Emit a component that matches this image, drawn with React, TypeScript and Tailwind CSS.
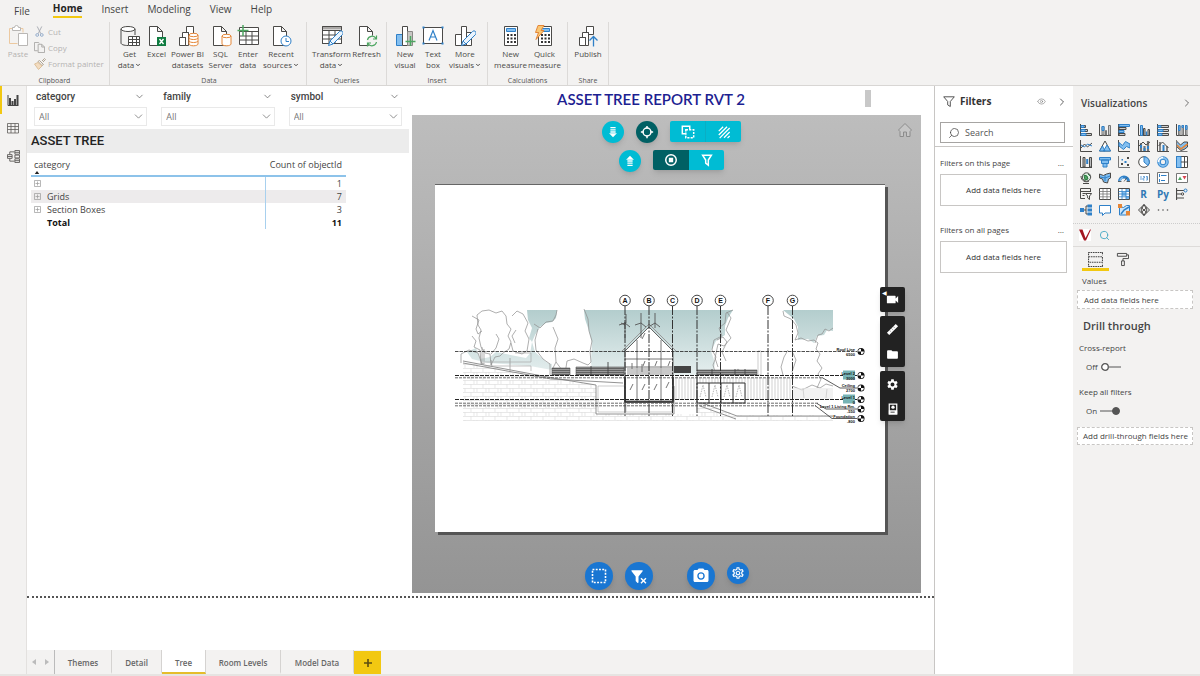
import { ReactNode, useState } from 'react'
import { clsx } from 'clsx'
import { ChevronDown, ChevronRight, Eye, Search } from 'lucide-react'
import { MdFolder, MdOutlineSettings, MdPhotoCamera, MdSettings, MdVideocam } from 'react-icons/md'

const INK = '#4b4a48'
const BLUE = '#2f80c8'
const SKY = '#83bff0'
const ORANGE = '#e58637'
const GREEN = '#4da661'

/* ---------- ribbon ---------- */

function RibbonIcon({ children }: { children: ReactNode }) {
  return (
    <svg viewBox="0 0 22 22" className="size-[22px]" fill="none" stroke={INK} strokeWidth="1" aria-hidden="true">
      {children}
    </svg>
  )
}

const sheet = <path d="M3.5 1.5h8l5 5v14h-13zM11.5 1.5v5h5" fill="#fff" />
const blocks = (
  <path d="M2.500 12.500h6v8h-6zM5.500 7.500h6v13h-3v-8h-3zM9.500 1.500h7v8h-5v-2h-2z" fill="#fff" />
)
const pencil = (
  <path d="M7.5 20.5L9 16l9.500-9.500a1.800 1.800 0 0 1 3 3L12 19zM9 16l3 3" fill="#eaf4fd" stroke={BLUE} />
)

const getDataIcon = (
  <RibbonIcon>
    <ellipse cx="9" cy="4" rx="7" ry="2.5" fill="#fff" />
    <path d="M2 4v14c0 1.500 3 2.500 7 2.500M16 4v6" />
    <path d="M9.500 11.500h11v9h-11z" fill="#fff" />
    <path d="M9.500 14.500h11M9.500 17.500h11M13.500 11.500v9M17.500 11.500v9" />
  </RibbonIcon>
)
const excelIcon = (
  <RibbonIcon>
    {sheet}
    <path d="M11 12h9v9h-9z" fill="#107c41" stroke="none" />
    <path d="M13.500 14l4 5M17.500 14l-4 5" stroke="#fff" strokeWidth="1.4" />
  </RibbonIcon>
)
const datasetsIcon = (
  <RibbonIcon>
    {blocks}
    <path d="M12 10v9c0 1 2 1.800 4.500 1.800s4.500-.8 4.500-1.800v-9" fill="#fff" stroke={ORANGE} />
    <ellipse cx="16.5" cy="10" rx="4.5" ry="1.7" fill="#fff" stroke={ORANGE} />
    <path d="M12 13c1 2 8 2 9 0M12 16c1 2 8 2 9 0" stroke={ORANGE} />
  </RibbonIcon>
)
const sqlIcon = (
  <RibbonIcon>
    {sheet}
    <path d="M12 11v8c0 1 2 1.800 4.500 1.800s4.500-.8 4.500-1.800v-8" fill="#fff" stroke={ORANGE} />
    <ellipse cx="16.5" cy="11" rx="4.5" ry="1.7" fill="#fff" stroke={ORANGE} />
  </RibbonIcon>
)
const enterIcon = (
  <RibbonIcon>
    <path d="M2.500 2.500h19v17h-19z" fill="#fff" />
    <path d="M2.500 6.500h19M2.500 11h19M2.500 15h19M9 6v13.500M15 6v13.500" />
    <path d="M6 0v11M.5 5.500h11" stroke={GREEN} strokeWidth="1.5" />
  </RibbonIcon>
)
const recentIcon = (
  <RibbonIcon>
    {sheet}
    <circle cx="16" cy="16" r="5" fill="#fff" stroke={BLUE} />
    <path d="M16 13v3.500h3" stroke={BLUE} />
  </RibbonIcon>
)
const transformIcon = (
  <RibbonIcon>
    <path d="M1.500 1.500h19v17h-19z" fill="#fff" />
    <path d="M1.500 3h19" strokeWidth="3" stroke="#aaa8a6" />
    <path d="M1.500 1.500h19v17h-19zM1.500 5.500h19M1.500 10h19M1.500 14h19M8 5v13.500M14 5v13.500" />
    {pencil}
  </RibbonIcon>
)
const refreshIcon = (
  <RibbonIcon>
    {sheet}
    <circle cx="16" cy="16" r="5.5" fill="#f3f2f1" stroke="none" />
    <path
      d="M11.500 15a4.600 4.600 0 0 1 8.500-1.500M20.500 17a4.600 4.600 0 0 1-8.500 1.500M20.500 10.500v3.500h-3.500M11.500 21.500v-3.500h3.500"
      stroke={GREEN}
      strokeWidth="1.2"
    />
  </RibbonIcon>
)
const newVisualIcon = (
  <RibbonIcon>
    <path d="M2.500 9.500h6v11h-6z" fill={SKY} stroke={BLUE} />
    <path d="M8.500 1.500h5v19h-5z" fill="#fff" />
    <path d="M13.500 6.500h5v14h-5z" fill="#c8c6c4" stroke="#8a8886" />
    <path d="M16.500 11v10M11.500 16.500h10" stroke={GREEN} strokeWidth="1.5" />
  </RibbonIcon>
)
const textBoxIcon = (
  <RibbonIcon>
    <path d="M1.500 2.500h19v16h-19z" fill="#fff" />
    <path d="M7 15.500l4-10 4 10M8.500 12h5" stroke={BLUE} strokeWidth="1.2" />
    <path d="M.5 1.500h2v2h-2zM19.500 1.500h2v2h-2zM.5 17.500h2v2h-2zM19.500 17.500h2v2h-2z" fill={BLUE} stroke="none" />
  </RibbonIcon>
)
const moreVisualsIcon = (
  <RibbonIcon>
    <path d="M1.500 9.500h6v11h-6zM7.500 1.500h5v19h-5zM12.500 7.500h5v13h-5z" fill="#fff" />
    {pencil}
  </RibbonIcon>
)
const calculator = (
  <>
    <path d="M4.500 1.500h13v19h-13z" fill="#fff" />
    <path d="M6.500 3.500h9v3h-9z" fill={SKY} stroke={BLUE} />
    <path d="M7 10h9M7 13.500h9M7 17h9" strokeWidth="2" strokeDasharray="2 1.5" stroke="#333" />
  </>
)
const measureIcon = <RibbonIcon>{calculator}</RibbonIcon>
const quickIcon = (
  <RibbonIcon>
    {calculator}
    <path d="M4 .5h6l-3 5h3l-8 9 2.500-7h-3z" fill="#f9c774" stroke={ORANGE} />
  </RibbonIcon>
)
const publishIcon = (
  <RibbonIcon>
    {blocks}
    <path d="M16.500 21.500v-9M12.500 15.500l4-4 4 4" stroke={BLUE} strokeWidth="1.3" />
  </RibbonIcon>
)

interface RibbonItem {
  label: string[]
  width: string
  icon: ReactNode
  menu?: boolean
}

const ribbonGroups: { title: string; className: string; items: RibbonItem[] }[] = [
  {
    title: 'Data',
    className: 'w-[197px] pl-[2px]',
    items: [
      { label: ['Get', 'data'], width: 'w-[27px]', icon: getDataIcon, menu: true },
      { label: ['Excel'], width: 'w-[27px]', icon: excelIcon },
      { label: ['Power BI', 'datasets'], width: 'w-[35px]', icon: datasetsIcon },
      { label: ['SQL', 'Server'], width: 'w-[31px]', icon: sqlIcon },
      { label: ['Enter', 'data'], width: 'w-[24px]', icon: enterIcon },
      { label: ['Recent', 'sources'], width: 'w-[42px]', icon: recentIcon, menu: true }
    ]
  },
  {
    title: 'Queries',
    className: 'w-[80px]',
    items: [
      { label: ['Transform', 'data'], width: 'w-[40px]', icon: transformIcon, menu: true },
      { label: ['Refresh'], width: 'w-[30px]', icon: refreshIcon }
    ]
  },
  {
    title: 'Insert',
    className: 'w-[101px]',
    items: [
      { label: ['New', 'visual'], width: 'w-[28px]', icon: newVisualIcon },
      { label: ['Text', 'box'], width: 'w-[28px]', icon: textBoxIcon },
      { label: ['More', 'visuals'], width: 'w-[36px]', icon: moreVisualsIcon, menu: true }
    ]
  },
  {
    title: 'Calculations',
    className: 'w-[80px]',
    items: [
      { label: ['New', 'measure'], width: 'w-[34px]', icon: measureIcon },
      { label: ['Quick', 'measure'], width: 'w-[34px]', icon: quickIcon }
    ]
  },
  {
    title: 'Share',
    className: 'w-[41px]',
    items: [{ label: ['Publish'], width: 'w-[32px]', icon: publishIcon }]
  }
]

function RibbonGroup({ title, className, children }: { title: string; className: string; children: ReactNode }) {
  return (
    <section className={clsx('flex shrink-0 flex-col justify-between border-r border-[#dcdad8]', className)}>
      {children}
      <h2 className="text-center text-[7px] leading-[9px] text-[#555]">{title}</h2>
    </section>
  )
}

function Ribbon() {
  const tabs = ['Insert', 'Modeling', 'View', 'Help']

  return (
    <header className="border-b border-[#d8d6d4] bg-[#f3f2f1]">
      <nav className="flex h-[19px] items-start gap-[19px] pl-[14px] text-[10px] leading-[18px] text-[#444]">
        <button type="button" className="mr-1 pt-0.5">File</button>
        <button type="button" className="border-b-2 border-[#f2c811] leading-[16px] font-bold text-[#252423]">Home</button>
        {tabs.map((tab) => (
          <button type="button" key={tab}>{tab}</button>
        ))}
      </nav>
      <div className="flex h-[66px] pt-[3px] text-[8px] leading-[11px] text-[#4b4a48]">
        <RibbonGroup title="Clipboard" className="w-[110px]">
          <div className="flex gap-[5px] pl-[7px] text-[#b5b3b1]">
            <button type="button" className="flex w-[22px] flex-col items-center gap-px pt-[3px]">
              <svg viewBox="0 0 22 22" className="size-[22px]" fill="none" aria-hidden="true">
                <path d="M5 3.500H2.500v15h8M14 3.500h2v4" stroke="#ecc9a0" />
                <path d="M5.500 5.500v-3h2a2 2 0 0 1 4 0h2v3zM11.500 8.500h9v12h-9z" fill="#fff" stroke="#b9b7b5" />
              </svg>
              Paste
            </button>
            <div className="flex flex-col items-start gap-[3px] pt-[3px] leading-[13px]">
              <button type="button" className="flex items-center gap-[3px]">
                <svg viewBox="0 0 12 12" className="size-[11px]" fill="none" stroke="#a5a9b0" aria-hidden="true">
                  <path d="M3.500.5l4 8M8.500.5l-4 8" />
                  <circle cx="3.5" cy="9.8" r="1.5" stroke="#8ea9c9" />
                  <circle cx="8.5" cy="9.8" r="1.5" stroke="#8ea9c9" />
                </svg>
                Cut
              </button>
              <button type="button" className="flex items-center gap-[3px]">
                <svg viewBox="0 0 12 12" className="size-[11px]" fill="none" stroke="#a9a7a5" aria-hidden="true">
                  <path d="M4 9.500H.5v-9H5l1 1M4.500 2.500h4l3 3v6h-7zM8.500 2.500v3h3" />
                </svg>
                Copy
              </button>
              <button type="button" className="flex items-center gap-[2px] whitespace-nowrap">
                <svg viewBox="0 0 12 12" className="size-[12px]" fill="none" stroke="#b0a493" aria-hidden="true">
                  <path d="M8 3l2.500-2.500 1 1L9 4M5.500 2.500l4 4-1.500 1-4-4z" />
                  <path d="M4 4.500L.5 6l4 5.500L8 8z" fill="#f3dcc0" stroke="#dcc09a" />
                </svg>
                Format painter
              </button>
            </div>
          </div>
        </RibbonGroup>
        {ribbonGroups.map((group) => (
          <RibbonGroup key={group.title} title={group.title} className={group.className}>
            <div className="flex justify-center pt-[3px]">
              {group.items.map((item) => (
                <button
                  type="button"
                  key={item.label.join(' ')}
                  className={clsx('flex flex-col items-center gap-px whitespace-nowrap', item.width)}
                >
                  {item.icon}
                  <span>
                    {item.label[0]}
                    {item.label[1] && (
                      <span className="flex items-center justify-center">
                        {item.label[1]}
                        {item.menu && <ChevronDown className="ml-px size-[6px]" strokeWidth={4} />}
                      </span>
                    )}
                  </span>
                </button>
              ))}
            </div>
          </RibbonGroup>
        ))}
      </div>
    </header>
  )
}

/* ---------- left rail ---------- */

function ViewRail() {
  return (
    <nav className="flex w-[27px] shrink-0 flex-col border-r border-[#e3e1df] bg-[#f3f2f1] text-[#605e5c]">
      <button type="button" aria-label="Report" className="grid h-[28px] place-items-center border-l-2 border-[#f2c811] pr-0.5">
        <svg viewBox="0 0 12 12" className="size-[12px]" fill="none" stroke="#444">
          <path d="M1 1v10.500h10.500" />
          <path d="M3 4v7M5.500 7v4M8 5v6M10.500 1v10" strokeWidth="2" />
        </svg>
      </button>
      <button type="button" aria-label="Data" className="grid h-[28px] place-items-center">
        <svg viewBox="0 0 12 12" className="size-[12px]" fill="none" stroke="currentColor" strokeWidth=".8">
          <path d="M.5 1.500h11v9.500H.5zM.5 4.500h11M.5 7.500h11M4 1.500V11M8 1.500V11" />
        </svg>
      </button>
      <button type="button" aria-label="Model" className="grid h-[28px] place-items-center">
        <svg viewBox="0 0 14 14" className="size-[13px]" fill="none" stroke="currentColor">
          <path d="M.5 5h5v4h-5zM.5 7h5M8.500.5h5v4h-5zM8.500 2.500h5M8.500 9.500h5v4h-5zM8.500 11.500h5M8.500 5.500h5v3h-5zM3 5V2h5M3 9v3h5" />
        </svg>
      </button>
    </nav>
  )
}

/* ---------- report: slicers and table ---------- */

function Slicer({ name }: { name: string }) {
  return (
    <div className="flex-1">
      <div className="flex h-[21px] items-center justify-between px-[2px]">
        <label htmlFor={name} className="font-['Roboto',sans-serif] text-[10px] leading-[14px] font-medium text-[#444]">
          {name}
        </label>
        <ChevronDown className="size-[11px] text-[#555]" strokeWidth={1.5} />
      </div>
      <div className="relative">
        <select
          id={name}
          className="block h-[19px] w-full appearance-none border border-[#e9e9e9] bg-white px-1 text-[9px] text-[#777]"
        >
          <option>All</option>
        </select>
        <ChevronDown
          className="pointer-events-none absolute top-[3px] right-[2px] size-[13px] text-[#777]"
          strokeWidth={1.5}
        />
      </div>
    </div>
  )
}

const rows = [
  { category: '', count: 1 },
  { category: 'Grids', count: 7 },
  { category: 'Section Boxes', count: 3 }
]

function AssetTable() {
  return (
    <table className="mt-[5px] ml-1 w-[315px] border-collapse text-[9px] leading-[13px] text-[#444]">
      <thead>
        <tr className="border-b-2 border-[#8dc3ea]">
          <th className="px-[3px] text-left font-normal">
            category
            <svg viewBox="0 0 6 4" className="mb-px h-[3px] w-[6px]" aria-hidden="true">
              <path d="M0 4l3-4 3 4z" fill="#222" />
            </svg>
          </th>
          <th className="w-[81px] px-[4px] pb-[4px] text-right font-normal whitespace-nowrap">Count of objectId</th>
        </tr>
      </thead>
      <tbody>
        {rows.map((row) => (
          <tr key={row.category} className={clsx(row.category === 'Grids' && 'bg-[#edebec]')}>
            <td className="border-r border-r-[#a8d0ee] p-0 pl-[3px]">
              <div className="flex items-center gap-[6px]">
                <button type="button" aria-label="Expand">
                  <svg viewBox="0 0 7 7" className="size-[7px]" fill="none" stroke="#999">
                    <path d="M.5.5h6v6h-6zM3.500 1.500v4M1.500 3.500h4" strokeWidth=".7" />
                  </svg>
                </button>
                {row.category}
              </div>
            </td>
            <td className="px-[4px] py-0 text-right">{row.count}</td>
          </tr>
        ))}
        <tr className="font-bold text-[#111]">
          <td className="border-r border-r-[#a8d0ee] py-0 pl-[16px]">Total</td>
          <td className="px-[4px] py-0 text-right">11</td>
        </tr>
      </tbody>
    </table>
  )
}

/* ---------- report: section drawing ---------- */

const gridLines = [
  { name: 'A', x: 625 },
  { name: 'B', x: 649 },
  { name: 'C', x: 672.5 },
  { name: 'D', x: 697 },
  { name: 'E', x: 720.5 },
  { name: 'F', x: 768 },
  { name: 'G', x: 792.5 }
]

const levels = [
  { name: 'Roof Line', value: '6500', y: 351.5, active: false },
  { name: 'Level 2', value: '3000', y: 375.5, active: true },
  { name: 'Ceiling', value: '2700', y: 388, active: false },
  { name: 'Level 1', value: '0', y: 399.5, active: true },
  { name: 'Level 1 Living Rm.', value: '-550', y: 409, active: false },
  { name: 'Foundation', value: '-800', y: 418.5, active: false }
]

function SectionDrawing() {
  return (
    <svg
      viewBox="435 185 450 347"
      className="block w-full font-['Liberation_Sans',sans-serif]"
      role="img"
      aria-label="Building section"
    >
      <defs>
        <linearGradient id="sky" x1="0" y1="310" x2="0" y2="375" gradientUnits="userSpaceOnUse">
          <stop offset="0" stopColor="#b3cdcd" />
          <stop offset="1" stopColor="#e6efef" />
        </linearGradient>
        <pattern id="earth" width="12" height="8" patternUnits="userSpaceOnUse">
          <path d="M0 .5h12M0 4.500h12M3 0v4M9 4v4M6 4v4" stroke="#dedede" strokeWidth=".7" fill="none" />
        </pattern>
        <pattern id="siding" width="3" height="4" patternUnits="userSpaceOnUse">
          <path d="M1 0v4" stroke="#bdbdbd" strokeWidth=".7" />
        </pattern>
        <pattern id="rail" width="2" height="2" patternUnits="userSpaceOnUse">
          <path d="M0 0h2v2H0z" fill="#999" />
          <path d="M0 .5h2" stroke="#555" strokeWidth=".8" />
        </pattern>
      </defs>

      {/* sky between the trees */}
      <g fill="url(#sky)">
        <path d="M527 310h30l-1 8-4 4-6 1-6 4-5 8-3 7-3-4 3-10-4-8z" />
        <path d="M584 310h149l-5 8-3 8 0 9-9 6-5 10 4 12-2 12H592l-1-14 1-18-3-12-4-12z" />
        <path d="M783 310h50v21l-6-1-3 5-7 1-3 7-6-4-10 1 0-13-4-8z" />
        <path d="M467 352l9-4 4 11 10-2 6-5 10 2 20 4 5-6 4 7 17 5v6l-22-4-42-3-16-4z" />
        <path d="M532 342l3 10 9 8 7 6h-18l-3-12z" />
      </g>

      {/* earth */}
      <path d="M463 362l133 23v29h101v-13l40 14h96v6H463z" fill="url(#earth)" />
      <path
        d="M463 361l90 17 43 7v29h78v-28M463 363l88 16 72 4M697 401l40 15h96M700 406l36 13"
        fill="none"
        stroke="#777"
        strokeWidth=".8"
      />
      <path d="M598 386h27v26h-27zM626 402h46v10h-46z" fill="#fff" stroke="#999" strokeWidth=".5" />

      {/* trees */}
      <g fill="none" stroke="#8d8d8d" strokeWidth=".7" strokeLinejoin="round">
        <path d="M477 315l5-4 7-1 7 3 6-2 4 5 1 8 4 5-3 7 3 6-2 7-6 4-3 3-5 1-4 8-1-11-5-1-4-6-2-9 2-8-3-5z" />
        <path d="M472 316l7 4-3 9 2 5 4-3M472 336l4 5-2 6 6 3 1 14M496 334l3 5-3 9-5 6M512 316l5-5 6 3 5 9-3 8 4 8-2 12-5 3-9-3-2-8M516 330l-4 6 3 7" />
        <path d="M534 324l6 4 6-6 7-1 3-6 1-5M538 329l-3 11 1 10 7 9 7 5v11M553 327l5 12-3 9 1 14-3 6M556 362l9 12 2-13 7-2 9 4 5 2 3-3-1-11 2-10-3-10-1-12-4-10" />
        <path d="M461 363v-9l8-4 9 3 4 11M482 347v17h2v-15M510 358v14M491 360l1 7" />
        <path d="M733 310l-7 3-1 10-6 5 3 8-8 4-2 10 4 7-3 8 3 10M727 312l4 6-5 12 5 8-7 8-6-2-3 14 3 9M717 340l6-3 4 5-5 10 4 9M736 373c0-5 4-5 4 0" />
        <path d="M783 311l1 5 7 3 5 6 2 8-3 7 6-2 7 3 6-1 4 3-2 6 4 5-3 7 5 7-4 6 3 5-4 9M833 328l-4 3-4-2-3 5-4 1-3 8M788 350l-4 7-3 10 2 8M793 353l3 7-4 12M833 386l-7-2-6 4-8-3-10 5-10-4M804 398l-1-10M826 398l1-9" />
      </g>

      {/* fences and terrace */}
      <path d="M485 362h46v-9h-16M484 366h47v5" fill="none" stroke="#aaa" strokeWidth=".7" />
      <path d="M552 368h18v7h-18zM576 367h48v8h-48zM697 370h60v5h-60z" fill="url(#rail)" stroke="#555" strokeWidth=".6" />
      <path d="M674 366h17v7h-17z" fill="#444" />
      <path d="M591 366v9M608 362v13M712 369v6M735 369v6M745 369v6" stroke="#444" strokeWidth=".9" />
      <path d="M758 351h3v24h-3z" fill="#fff" stroke="#999" strokeWidth=".5" />
      <path d="M674 378h118v22H674z" fill="url(#siding)" />
      <path d="M792 388h41v11h-41z" fill="#e9e9e9" opacity=".6" />

      {/* house */}
      <path d="M625 351l24-24 24 24v50h-48z" fill="#fff" stroke="#666" />
      <path d="M622 351l27-27 27 27" fill="none" stroke="#999" />
      <path d="M625 359h48M637 340v61M661 340v61M625 367h48" stroke="#555" strokeWidth=".8" />
      <path d="M627 368h45v7h-45z" fill="#bbb" opacity=".8" />
      <path d="M625 377v25h48v-25" fill="none" stroke="#222" strokeWidth="1.5" />
      <path
        d="M633 384l-3 6M645 384l-3 6M657 384l-3 6M669 382l-3 6M645 361l-2 5M657 361l-2 5M670 361l-2 5M645 333l-3 6M632 363v6M642 364v8"
        stroke="#666"
        strokeWidth=".9"
      />
      <path
        d="M625 338v-16M619 325l6-2 5 4M621 323l4 2M641 338v-16M635 325l6-2 5 4M655 328v-15M650 326l5-3 5 4M626 314v9M641 313v9"
        fill="none"
        stroke="#555"
        strokeWidth=".9"
      />

      {/* doors */}
      <path d="M697 383h48v20h-48zM709 383v20M721 383v20M733 383v20" fill="#fff" stroke="#333" />
      <path
        d="M700 397l3-12 3 12M712 397l3-12 3 12M724 397l3-12 3 12M736 397l3-12 3 12"
        fill="none"
        stroke="#888"
        strokeWidth=".6"
        strokeDasharray="1.5 1"
      />

      {/* levels */}
      <g fill="none" stroke="#222">
        <path d="M455 351.500h402" strokeWidth=".8" strokeDasharray="3.5 1" />
        <path d="M455 375.500h402M455 399.500h402" strokeDasharray="4 1" />
        <path d="M455 377.800h367M455 403.200h363M455 405.800h361" stroke="#444" strokeWidth=".8" strokeDasharray="3 1" />
      </g>
      <path
        d="M822 377.500l18 10.500h17M817 403.500l9 5.500h31M815 405.500l17 13h25"
        fill="none"
        stroke="#333"
        strokeWidth=".8"
      />

      {/* grid bubbles */}
      {gridLines.map((line) => (
        <g key={line.name}>
          <path d={`M${line.x} 306v110`} stroke="#333" strokeDasharray="9 1.5 2 1.5" />
          <circle cx={line.x} cy="300.5" r="5.3" fill="#fff" stroke="#333" strokeWidth=".9" />
          <text x={line.x} y="303" textAnchor="middle" fontSize="7" fontWeight="700" fill="#111">{line.name}</text>
        </g>
      ))}

      {/* level heads */}
      {levels.map((level) => (
        <g key={level.name}>
          {level.active && <path d={`M843 ${level.y - 5}h12v9h-12z`} fill="#76b3b5" />}
          <text x="855" y={level.y - 1} textAnchor="end" fontSize="4" fontWeight="700" fill="#111">{level.name}</text>
          <text x="855" y={level.y + 4} textAnchor="end" fontSize="4" fontWeight="700" fill="#111">{level.value}</text>
          <circle cx="861" cy={level.y} r="3.5" fill="#111" />
          <path
            d={`M861 ${level.y}v-2.800a2.800 2.800 0 0 0-2.800 2.800zM861 ${level.y}v2.800a2.800 2.800 0 0 0 2.800-2.800z`}
            fill="#fff"
          />
        </g>
      ))}
    </svg>
  )
}

/* ---------- report: model viewer ---------- */

function RoundButton({ label, className, children }: { label: string; className: string; children: ReactNode }) {
  return (
    <button
      type="button"
      aria-label={label}
      className={clsx('grid place-items-center rounded-full text-white shadow-md', className)}
    >
      {children}
    </button>
  )
}

function Glyph({ children }: { children: ReactNode }) {
  return (
    <svg viewBox="0 0 16 16" className="size-[14px]" fill="none" stroke="currentColor" strokeWidth="1.7">
      {children}
    </svg>
  )
}

function ModelViewer() {
  return (
    <div className="relative flex flex-col bg-linear-to-b from-[#bdbdbd] to-[#949494] pt-[6px]">
      <div className="flex flex-col items-center gap-[7px] pl-[10px]">
        <div className="flex h-[22px] items-start gap-[12px]">
          <RoundButton label="Move down" className="size-[22px] bg-[#00bcd4]">
            <Glyph>
              <path d="M5 3h6M5 5.500h6M5 8h6" strokeWidth="1.5" />
              <path d="M3.500 9.500h9L8 14z" fill="currentColor" stroke="none" />
            </Glyph>
          </RoundButton>
          <RoundButton label="Focus" className="size-[22px] bg-[#006064]">
            <Glyph>
              <circle cx="8" cy="8" r="4.5" />
              <path d="M8 1v3M8 12v3M1 8h3M12 8h3" />
            </Glyph>
          </RoundButton>
          <div className="flex h-[21px] overflow-hidden rounded-xs text-white shadow-md">
            <button type="button" aria-label="Isolate" className="grid w-[36px] place-items-center border-r border-[#0aaec4] bg-[#00bcd4]">
              <Glyph>
                <path d="M5 10H1.500V1.500H10V5" />
                <path d="M5.500 5.500h9v9h-9z" strokeDasharray="2.5 1.3" />
              </Glyph>
            </button>
            <button type="button" aria-label="Hatch" className="grid w-[35px] place-items-center bg-[#00bcd4]">
              <Glyph>
                <path d="M2 7l5-5M2 11.500l9.500-9.500M3 15L14.500 3.500M8 14.500L14.500 8M12 15l2.500-2.500" strokeWidth="1.5" />
              </Glyph>
            </button>
          </div>
        </div>
        <div className="flex h-[22px] items-start gap-[12px]">
          <RoundButton label="Move up" className="size-[22px] bg-[#00bcd4]">
            <Glyph>
              <path d="M3.500 6.500h9L8 2z" fill="currentColor" stroke="none" />
              <path d="M5 8h6M5 10.500h6M5 13h6" strokeWidth="1.5" />
            </Glyph>
          </RoundButton>
          <div className="flex h-[20px] overflow-hidden rounded-xs text-white shadow-md">
            <button type="button" aria-label="Select" className="grid w-[36px] place-items-center bg-[#006064]">
              <Glyph>
                <circle cx="8" cy="8" r="6" />
                <path d="M5.500 5.500h5v5h-5z" fill="currentColor" stroke="none" />
              </Glyph>
            </button>
            <button type="button" aria-label="Filter" className="grid w-[35px] place-items-center bg-[#00bcd4]">
              <Glyph>
                <path d="M3 2.500h10L9.500 8v6l-3-2.500V8z" />
              </Glyph>
            </button>
          </div>
        </div>
      </div>
      <button type="button" aria-label="Home view" className="absolute top-[7px] right-[8px] text-[#8c8c8c]">
        <svg viewBox="0 0 16 16" className="size-[16px]" fill="#c6c6c6" stroke="currentColor">
          <path d="M8 1.500L1.500 8 3 9.500v5h3.500V10h3v4.500H13v-5L14.500 8z" />
        </svg>
      </button>

      <div className="relative mt-[12px] mr-[36px] ml-[23px] border-t border-[#666] bg-white shadow-[3px_3px_0_#555]">
        <SectionDrawing />
        <div className="absolute top-[102px] right-[-20px] flex w-[25px] flex-col gap-[4px] text-white">
          <div className="grid rounded-xs bg-[#222] shadow-md">
            <button type="button" aria-label="Camera" className="relative grid h-[25px] place-items-center">
              <MdVideocam className="size-[15px]" />
              <span className="absolute top-[3px] left-[2px] text-[6px] leading-[6px]">◀</span>
            </button>
          </div>
          <div className="grid rounded-xs bg-[#222] shadow-md">
            <button type="button" aria-label="Measure" className="grid h-[26px] place-items-center">
              <svg viewBox="0 0 14 14" className="size-[13px]">
                <path d="M1 10.500L10.500 1 13 3.500 3.500 13z" fill="#fff" />
                <path d="M4 8l1 1M6 6l1 1M8 4l1 1" stroke="#222" strokeWidth=".7" />
              </svg>
            </button>
            <button type="button" aria-label="Documents" className="grid h-[25px] place-items-center">
              <MdFolder className="size-[13px]" />
            </button>
          </div>
          <div className="grid rounded-xs bg-[#222] shadow-md">
            <button type="button" aria-label="Settings" className="grid h-[26px] place-items-center">
              <MdSettings className="size-[13px]" />
            </button>
            <button type="button" aria-label="Properties" className="grid h-[24px] place-items-center">
              <svg viewBox="0 0 12 14" className="h-[12px] w-[10px]">
                <path d="M1.500 1h9v12h-9z" fill="#222" stroke="#fff" strokeWidth="1.5" />
                <path d="M1 8.500h10V13H1z" fill="#fff" />
                <circle cx="6" cy="4.8" r="2" fill="#fff" />
                <path d="M3 10.800h5" stroke="#222" />
              </svg>
            </button>
          </div>
        </div>
      </div>

      <div className="mt-auto flex h-[31px] justify-center">
        <RoundButton label="Select box" className="size-[28px] bg-[#1976d2]">
          <svg viewBox="0 0 16 16" className="size-[16px]" fill="none" stroke="#fff" strokeWidth="1.6">
            <path d="M1.500 1.500h13v13h-13z" strokeDasharray="1.9 1.35" />
          </svg>
        </RoundButton>
        <RoundButton label="Clear filter" className="ml-[12px] size-[28px] bg-[#1976d2]">
          <svg viewBox="0 0 24 24" className="size-[17px]" fill="currentColor">
            <path d="M14.760 20.830L17.600 18l-2.840-2.830 1.410-1.410L19 16.570l2.830-2.810 1.410 1.410L20.430 18l2.810 2.830-1.410 1.410L19 19.400l-2.830 2.840-1.410-1.410M12 12v7.880c.04.3-.06.62-.29.83a1 1 0 0 1-1.410 0L8.290 18.700a1 1 0 0 1-.29-.83V12h-.03L2.210 4.620a1 1 0 0 1 .17-1.400c.19-.14.4-.22.62-.22h14c.22 0 .43.080.62.220a1 1 0 0 1 .17 1.400L12.030 12z" />
          </svg>
        </RoundButton>
        <RoundButton label="Snapshot" className="ml-[34px] size-[28px] bg-[#1976d2]">
          <MdPhotoCamera className="size-[18px]" />
        </RoundButton>
        <RoundButton label="Options" className="ml-[12px] size-[22px] bg-[#1976d2]">
          <MdOutlineSettings className="size-[14px]" />
        </RoundButton>
      </div>
    </div>
  )
}

function ReportCanvas() {
  return (
    <div className="flex flex-1 flex-col">
      <div className="flex border-b-2 border-dotted border-[#555] pb-[3px]">
        <div className="w-[385px] shrink-0">
          <div className="flex gap-[14px] pr-[10px] pl-[7px]">
            <Slicer name="category" />
            <Slicer name="family" />
            <Slicer name="symbol" />
          </div>
          <h2 className="mt-[3px] mr-[3px] bg-[#ececec] pl-1 font-['Roboto',sans-serif] text-[13px] leading-[24px] font-medium text-[#222]">
            ASSET TREE
          </h2>
          <AssetTable />
        </div>
        <div className="flex min-w-0 flex-1 flex-col pr-[13px]">
          <div className="flex h-[29px] items-center justify-between pr-[50px]">
            <h1 className="flex-1 pb-[3px] pl-[25px] text-center font-['Lato',sans-serif] text-[15px] leading-[18px] font-semibold text-[#1c2191]">
              ASSET TREE REPORT RVT 2
            </h1>
            <div className="mb-[4px] h-[17px] w-[6px] bg-[#c8c8c8]" />
          </div>
          <div className="grid min-h-[478px]">
            <ModelViewer />
          </div>
        </div>
      </div>
    </div>
  )
}

function PageTabs() {
  const [active, setActive] = useState('Tree')
  const pages = [
    { name: 'Themes', width: 'w-[57px]' },
    { name: 'Detail', width: 'w-[50px]' },
    { name: 'Tree', width: 'w-[44px]' },
    { name: 'Room Levels', width: 'w-[75px]' },
    { name: 'Model Data', width: 'w-[73px]' }
  ]

  return (
    <nav className="flex h-[24px] bg-[#f3f2f1] text-[8px] font-semibold text-[#666]">
      <div className="flex w-[28px] items-center justify-around border-r border-[#bbb] text-[#bbb]">
        <button type="button" aria-label="Previous page">
          <svg viewBox="0 0 4 6" className="h-[6px] w-[4px]" fill="currentColor"><path d="M4 0v6L0 3z" /></svg>
        </button>
        <button type="button" aria-label="Next page">
          <svg viewBox="0 0 4 6" className="h-[6px] w-[4px]" fill="currentColor"><path d="M0 0v6l4-3z" /></svg>
        </button>
      </div>
      {pages.map((page) => (
        <button
          type="button"
          key={page.name}
          onClick={() => setActive(page.name)}
          className={clsx(
            'border-r border-b-2 border-r-[#d5d3d1] pt-[3px]',
            page.width,
            active === page.name ? 'border-b-[#e5bd2b] bg-white' : 'border-b-transparent'
          )}
        >
          {page.name}
        </button>
      ))}
      <button type="button" aria-label="New page" className="mt-px grid w-[27px] place-items-center bg-[#f2c811]">
        <svg viewBox="0 0 8 8" className="size-[8px]" stroke="#5c4d10" strokeWidth="1.6"><path d="M4 0v8M0 4h8" /></svg>
      </button>
    </nav>
  )
}

/* ---------- filters pane ---------- */

function FilterSection({ title }: { title: string }) {
  return (
    <section className="pb-[15px]">
      <div className="flex items-center justify-between text-[8px] leading-[17px] text-[#444]">
        <h3>{title}</h3>
        <button type="button" aria-label="More options" className="pr-[3px]">…</button>
      </div>
      <div className="mt-[3px] grid h-[32px] place-items-center border border-[#c8c6c4] text-[8px] text-[#333]">
        Add data fields here
      </div>
    </section>
  )
}

function FiltersPane() {
  return (
    <aside className="w-[139px] shrink-0 border-l border-[#c8c6c4] bg-white">
      <div className="border-b border-[#c8c6c4] pb-[3px]">
        <div className="flex h-[31px] items-center pr-[5px] pl-[8px]">
          <svg viewBox="0 0 12 12" className="size-[12px]" fill="none" stroke="#444">
            <path d="M.7.8h10.600L7.300 5.500v5l-2.600-1.600V5.500z" strokeWidth=".9" />
          </svg>
          <h2 className="ml-[5px] flex-1 text-[10px] font-bold text-[#333]">Filters</h2>
          <button type="button" aria-label="Preview filters"><Eye className="size-[9px] text-[#777]" strokeWidth={1.5} /></button>
          <button type="button" aria-label="Collapse filters" className="ml-[10px]">
            <ChevronRight className="size-[12px] text-[#444]" strokeWidth={1.7} />
          </button>
        </div>
        <label className="mt-[5px] mr-[8px] ml-[5px] flex h-[21px] items-center gap-[5px] border border-[#a6a4a2] px-[7px]">
          <Search className="size-[12px] -scale-x-100 text-[#444]" strokeWidth={1.5} />
          <input
            type="search"
            aria-label="Search"
            placeholder="Search"
            className="min-w-0 flex-1 bg-transparent text-[9px] outline-none placeholder:text-[#555]"
          />
        </label>
      </div>
      <div className="pt-[7px] pr-[6px] pl-[5px]">
        <FilterSection title="Filters on this page" />
        <FilterSection title="Filters on all pages" />
      </div>
    </aside>
  )
}

/* ---------- visualizations pane ---------- */

const axis = <path d="M.5 0v11.500H12" stroke={INK} />

const visuals: { name: string; art: ReactNode }[] = [
  { name: 'Stacked bar chart', art: <><path d="M.5 0v12M.5 1.500h5v2h-5zM.5 5.500h7v2h-7zM.5 9.500h11v2H.5z" fill="#ccc" stroke={INK} /><path d="M1 1.500h3v2H1zM1 5.500h4v2H1zM1 9.500h5v2H1z" fill={SKY} stroke={BLUE} /></> },
  { name: 'Stacked column chart', art: <>{axis}<path d="M3 2.500h2V11H3zM6.500 6.500h1V11h-1zM9.500 1.500h2V11h-2z" fill="#ccc" stroke="#777" /><path d="M3 2.500h2v4H3z" fill={SKY} stroke={BLUE} /></> },
  { name: 'Clustered bar chart', art: <><path d="M.5 0v12" stroke={INK} /><path d="M1 .5h10.500v2H1zM1 6.500h5v2H1z" fill={SKY} stroke={BLUE} /><path d="M1 3.500h7v2H1zM1 9.500h6v2H1z" fill="#ccc" stroke={INK} /></> },
  { name: 'Clustered column chart', art: <>{axis}<path d="M2.500 1.500h2v10h-2z" fill={SKY} stroke={BLUE} /><path d="M5.500 4.500h1.500v7H5.500zM10 5.500h1.500v6H10z" fill="#ccc" stroke={INK} /><path d="M8.500 7.500v4" stroke={BLUE} strokeWidth="1.5" /></> },
  { name: '100% stacked bar chart', art: <><path d="M.5 0v12" stroke={INK} /><path d="M.5 1.500h11v2H.5zM.5 5.500h11v2H.5zM.5 9.500h11v2H.5z" fill="#ccc" stroke={INK} /><path d="M1 1.500h3v2H1zM1 5.500h5v2H1zM1 9.500h4v2H1z" fill={SKY} stroke={BLUE} /></> },
  { name: '100% stacked column chart', art: <>{axis}<path d="M2.500 1.500H4V11H2.500zM6 1.500h1.500V11H6zM9.500 1.500H11V11H9.500z" fill="#ccc" stroke="#777" /><path d="M2.500 1.500H4v5H2.500zM6 1.500h1.500v2H6zM9.500 1.500H11v4H9.500z" fill={SKY} stroke={BLUE} /></> },
  { name: 'Line chart', art: <>{axis}<path d="M1 8l3.500-4 3 3L12 3" stroke={INK} /><path d="M1 5l3.500 2 3-3L12 6" stroke={BLUE} /></> },
  { name: 'Area chart', art: <><path d="M.5 11l5.500-10 5.500 10z" fill="#fff" stroke={INK} /><path d="M4.500 11l3.500-6 3.500 6zM.5 11l3-5L6 11z" fill={SKY} stroke={BLUE} /></> },
  { name: 'Stacked area chart', art: <>{axis}<path d="M1 2.500l3.500 3 3-4L12 4v4L8.500 6.500l-3 3L1 6z" fill={SKY} stroke={BLUE} /></> },
  { name: 'Line and stacked column chart', art: <>{axis}<path d="M3 3v8M6.500 6v5M10 1v10" stroke="#777" strokeWidth="2.2" /><path d="M3 5v3M6.500 8v3M10 6v3" stroke={BLUE} strokeWidth="2" /><path d="M1 6l4-4 3 3 4-3" stroke={INK} /></> },
  { name: 'Line and clustered column chart', art: <>{axis}<path d="M3 2v9M10 6v5" stroke="#888" strokeWidth="2" /><path d="M6.500 5v6" stroke={BLUE} strokeWidth="2" /><path d="M1.500 6l4-4 6 6" stroke={INK} /></> },
  { name: 'Ribbon chart', art: <><path d="M.5 1l4 4 3.500-3h3.500v5L8 9.500l-3 1-4.500-4z" fill={SKY} stroke={INK} /><path d="M1 5l4 4 6.500-5" stroke={ORANGE} strokeWidth="1.6" /><path d="M.5 0v11.500h11" stroke="#777" /></> },
  { name: 'Waterfall chart', art: <>{axis}<path d="M3 1.500h2V11H3zM9.500 1.500h2V11h-2z" fill="#bbb" stroke={INK} /><path d="M7.200 3v5" stroke={BLUE} strokeWidth="2" /></> },
  { name: 'Funnel', art: <path d="M.5 1.500h11v2.500H.5zM2.500 4h7v3.500h-7zM4 7.500h4v3.500H4z" fill={SKY} stroke={BLUE} /> },
  { name: 'Scatter chart', art: <><path d="M.5 0v11.500H12" stroke="#777" /><path d="M3 7h2v2H3zM9 8h2v2H9z" fill={INK} /><path d="M6.500 5h2v2h-2zM3.500 3h1.500v1.500H3.500z" fill={BLUE} /><path d="M9 1h2v2H9z" fill={INK} /></> },
  { name: 'Pie chart', art: <><circle cx="6" cy="6" r="5.3" fill="#fff" stroke={INK} /><path d="M6 .7V6l4 3.500A5.300 5.300 0 0 0 6 .7z" fill={SKY} stroke={BLUE} /></> },
  { name: 'Donut chart', art: <><circle cx="6" cy="6" r="4" stroke={BLUE} strokeWidth="3.5" /><circle cx="6" cy="6" r="4" stroke={SKY} strokeWidth="1.8" /><path d="M6 1.500A4.500 4.500 0 0 0 1.500 6" stroke="#fff" strokeWidth="1.6" /></> },
  { name: 'Treemap', art: <><path d="M.5.5h11v11H.5z" fill="#fff" stroke={INK} /><path d="M.5.5H5v11H.5z" fill={SKY} stroke={BLUE} /><path d="M5 6h6.500M8.500.5V6M8.500 6v5.500" stroke={INK} /></> },
  { name: 'Map', art: <><circle cx="6.500" cy="5" r="4.200" fill="#dff0e3" stroke={INK} /><path d="M4 3l3 1 1 3-3 1zM8 2l2 2" fill={GREEN} stroke="#2f7a44" /><path d="M1 4c0 5 5 7 8 5M3 11.500h6" stroke={INK} /></> },
  { name: 'Filled map', art: <><path d="M.5 2l4 1.500 3-1.500 4-1v5l-2 1-1 4-4-1-1-3-3-1z" fill={SKY} stroke={INK} /><path d="M1 5l5 1 5-2M6 3v6" stroke={BLUE} /></> },
  { name: 'Gauge', art: <><path d="M1.500 9.500a4.500 4.500 0 0 1 9 0" stroke={BLUE} strokeWidth="3" /><path d="M2 9.500a4 4 0 0 1 3-3.800" stroke={SKY} strokeWidth="1.3" /><path d="M6 9.500l3-4M0 9.500h3.500M8.500 9.500H12" stroke={INK} strokeWidth=".8" /></> },
  { name: 'Card', art: <><path d="M.5 1.500h11v9H.5z" fill="#fff" stroke="#777" /><path d="M3 4v4M5 4.500h1.500V6H5v2h1.500M8 4.500h1.500V8H8M8 6h1.500" stroke={BLUE} strokeWidth=".7" /></> },
  { name: 'Multi-row card', art: <><path d="M.5.5h11v11H.5z" fill="#fff" stroke="#777" /><path d="M2.500 2v3M2.500 7v3M4 3.500h5.500M4 8.500h4" stroke={BLUE} /></> },
  { name: 'KPI', art: <><path d="M.5 1.500h11v9H.5z" fill="#fff" stroke="#777" /><path d="M2 8l2-3.500L6 8z" fill={GREEN} /><path d="M6.500 4h4L8.500 7.500z" fill="#d64550" /></> },
  { name: 'Slicer', art: <><path d="M10.500 4V.5H.5v10H5M.5 3.500h10M2.500 5.500h3M2.500 7.500h2" stroke={INK} /><path d="M5.500 5.500h6.200L9.500 8v3.500L7.700 10V8z" fill="#fff" stroke={INK} /></> },
  { name: 'Table', art: <><path d="M.5.5h11v11H.5z" fill="#fff" stroke={INK} /><path d="M.5 3.500h11M.5 6h11M.5 8.800h11M4 1v10.500M8 1v10.500" stroke="#777" strokeWidth=".8" /></> },
  { name: 'Matrix', art: <><path d="M.5.5h11v11H.5z" fill="#fff" stroke={INK} /><path d="M4 4h4v4H4zM8 1h3v3H8zM8 8h3v3H8z" fill={SKY} /><path d="M.5 3.500h11M.5 6h11M.5 8.800h11M4 1v10.500M8 1v10.500" stroke={BLUE} strokeWidth=".8" /></> },
  { name: 'R', art: null },
  { name: 'Py', art: null },
  { name: 'Key influencers', art: <><path d="M.5 0v12M1 2.500h7M1 6h4M1 10h7" stroke={INK} strokeWidth="1.2" /><circle cx="9.5" cy="2.5" r="1.5" stroke={BLUE} /><circle cx="6.5" cy="6" r="1.2" stroke={INK} /></> },
  { name: 'Decomposition tree', art: <><path d="M4 6h2M6 2v8M6 2h2M6 10h2" stroke={INK} /><path d="M0 4h4v4H0zM7.500.5H12v3H7.500zM7.500 4.500H12v3H7.500zM7.500 8.500H12v3H7.500z" fill={BLUE} /></> },
  { name: 'Q&A', art: <path d="M.5 1.500h11v7.500H6L3.500 11.500V9h-3z" fill="#fff" stroke={BLUE} /> },
  { name: 'ArcGIS map', art: <><path d="M1.500 2.500l4 1 3-2h3v6l-3 3.500h-7z" fill="#cfe6f8" stroke={BLUE} /><path d="M3 10l3-4 5-3" stroke={BLUE} strokeWidth="1.5" /><path d="M0 0h4v4H0zM8 7h4v4.500H8z" fill={ORANGE} /></> },
  { name: 'Power Apps', art: <path d="M6 .5l5.500 5.500L6 11.500.5 6zM3 3.500l6 5M9 3.500l-6 5M6 .5L3 6l3 5.500L9 6z" stroke={INK} /> }
]

function Toggle({ label, on }: { label: string; on: boolean }) {
  const [checked, setChecked] = useState(on)

  return (
    <label className="relative mt-[5px] ml-[13px] flex h-[14px] w-fit items-center gap-[3px] text-[8px] text-[#444]">
      <input
        type="checkbox"
        aria-label={label}
        checked={checked}
        onChange={() => setChecked(!checked)}
        className="sr-only"
      />
      {checked ? 'On' : 'Off'}
      <svg viewBox="0 0 20 8" className="h-[8px] w-[20px]" fill="none" stroke="#555" aria-hidden="true">
        {checked ? (
          <>
            <path d="M0 4h13" />
            <circle cx="16" cy="4" r="3.5" fill="#555" />
          </>
        ) : (
          <>
            <circle cx="4" cy="4" r="3.3" fill="#fff" strokeWidth="1.3" />
            <path d="M8 4h12" />
          </>
        )}
      </svg>
    </label>
  )
}

function VisualizationsPane() {
  return (
    <aside className="w-[127px] shrink-0 bg-[#f3f2f1] text-[8px] text-[#444]">
      <div className="flex h-[34px] items-center justify-between pr-[7px] pl-[8px]">
        <h2 className="text-[10px] font-semibold">Visualizations</h2>
        <button type="button" aria-label="Collapse visualizations">
          <ChevronRight className="size-[12px]" strokeWidth={1.5} />
        </button>
      </div>
      <div className="grid grid-cols-6 gap-y-[4px] pt-[4px] pr-[8px] pl-[3px]">
        {visuals.map((visual) => (
          <button type="button" key={visual.name} aria-label={visual.name} className="grid h-[12px] place-items-center">
            {visual.art ? (
              <svg viewBox="0 0 12 12" className="size-[12px]" fill="none">{visual.art}</svg>
            ) : (
              <span className="text-[10px] leading-[12px] font-bold text-[#3079b5]">{visual.name}</span>
            )}
          </button>
        ))}
        <button type="button" aria-label="More visuals" className="grid h-[12px] place-items-center">
          <svg viewBox="0 0 12 12" className="size-[12px]" fill="#555">
            <circle cx="1.5" cy="6" r=".8" />
            <circle cx="6" cy="6" r=".8" />
            <circle cx="10.5" cy="6" r=".8" />
          </svg>
        </button>
      </div>
      <div className="mt-[7px] flex h-[23px] items-center gap-[8px] border-t border-dotted border-[#ccc] pl-[6px]">
        <button type="button" aria-label="Model viewer visual">
          <svg viewBox="0 0 12 12" className="size-[12px]">
            <path d="M0 0h12v12H0z" fill="#fff" />
            <path d="M0 .5h3.500L6.500 9 11 .5h1L7 11.500H5z" fill="#a31621" />
          </svg>
        </button>
        <button type="button" aria-label="Search visual"><Search className="size-[11px] text-[#45a9c4]" strokeWidth={2} /></button>
      </div>
      <div className="flex gap-[7px] border-t border-[#dddbd9] pt-[3px] pl-[9px]">
        <button type="button" aria-label="Fields" className="grid h-[21px] w-[27px] place-items-center border-b-[3px] border-[#f2c811]">
          <svg viewBox="0 0 14 14" className="size-[15px]" fill="none" stroke="#444">
            <path d="M.5 3V.5h13V3M.5 4.500h13v5H.5zM.5 11v2.500h13V11" strokeDasharray="1.5 .7" />
          </svg>
        </button>
        <button type="button" aria-label="Format" className="grid h-[18px] place-items-center">
          <svg viewBox="0 0 14 16" className="h-[15px] w-[13px]" fill="none" stroke="#444">
            <path d="M1.500 1.500h10v3h-10zM11.500 3h2v4h-6v2.500M6 9.500h3v5H6z" />
          </svg>
        </button>
      </div>
      <h3 className="pt-[3px] pl-[9px] leading-[13px]">Values</h3>
      <div className="mt-[3px] mr-[7px] ml-[4px] h-[19px] border border-dashed border-[#c8c6c4] bg-white pl-[6px] leading-[17px]">
        Add data fields here
      </div>
      <h2 className="mt-[8px] pl-[10px] text-[11px] leading-[17px] font-semibold">Drill through</h2>
      <h3 className="mt-[7px] pl-[6px] leading-[14px]">Cross-report</h3>
      <Toggle label="Cross-report" on={false} />
      <h3 className="mt-[11px] pl-[6px] leading-[14px]">Keep all filters</h3>
      <Toggle label="Keep all filters" on />
      <div className="mt-[9px] mr-[7px] ml-[4px] h-[18px] border border-dashed border-[#c8c6c4] bg-white pl-[5px] leading-[16px] whitespace-nowrap">
        Add drill-through fields here
      </div>
    </aside>
  )
}

export default function App() {
  return (
    <div className="flex min-h-screen flex-col bg-white font-['Open_Sans','Noto_Sans',sans-serif]">
      <Ribbon />
      <div className="flex flex-1 border-b-2 border-[#e6e4e2]">
        <ViewRail />
        <main className="flex min-w-0 flex-1 flex-col">
          <ReportCanvas />
          <PageTabs />
        </main>
        <FiltersPane />
        <VisualizationsPane />
      </div>
    </div>
  )
}
